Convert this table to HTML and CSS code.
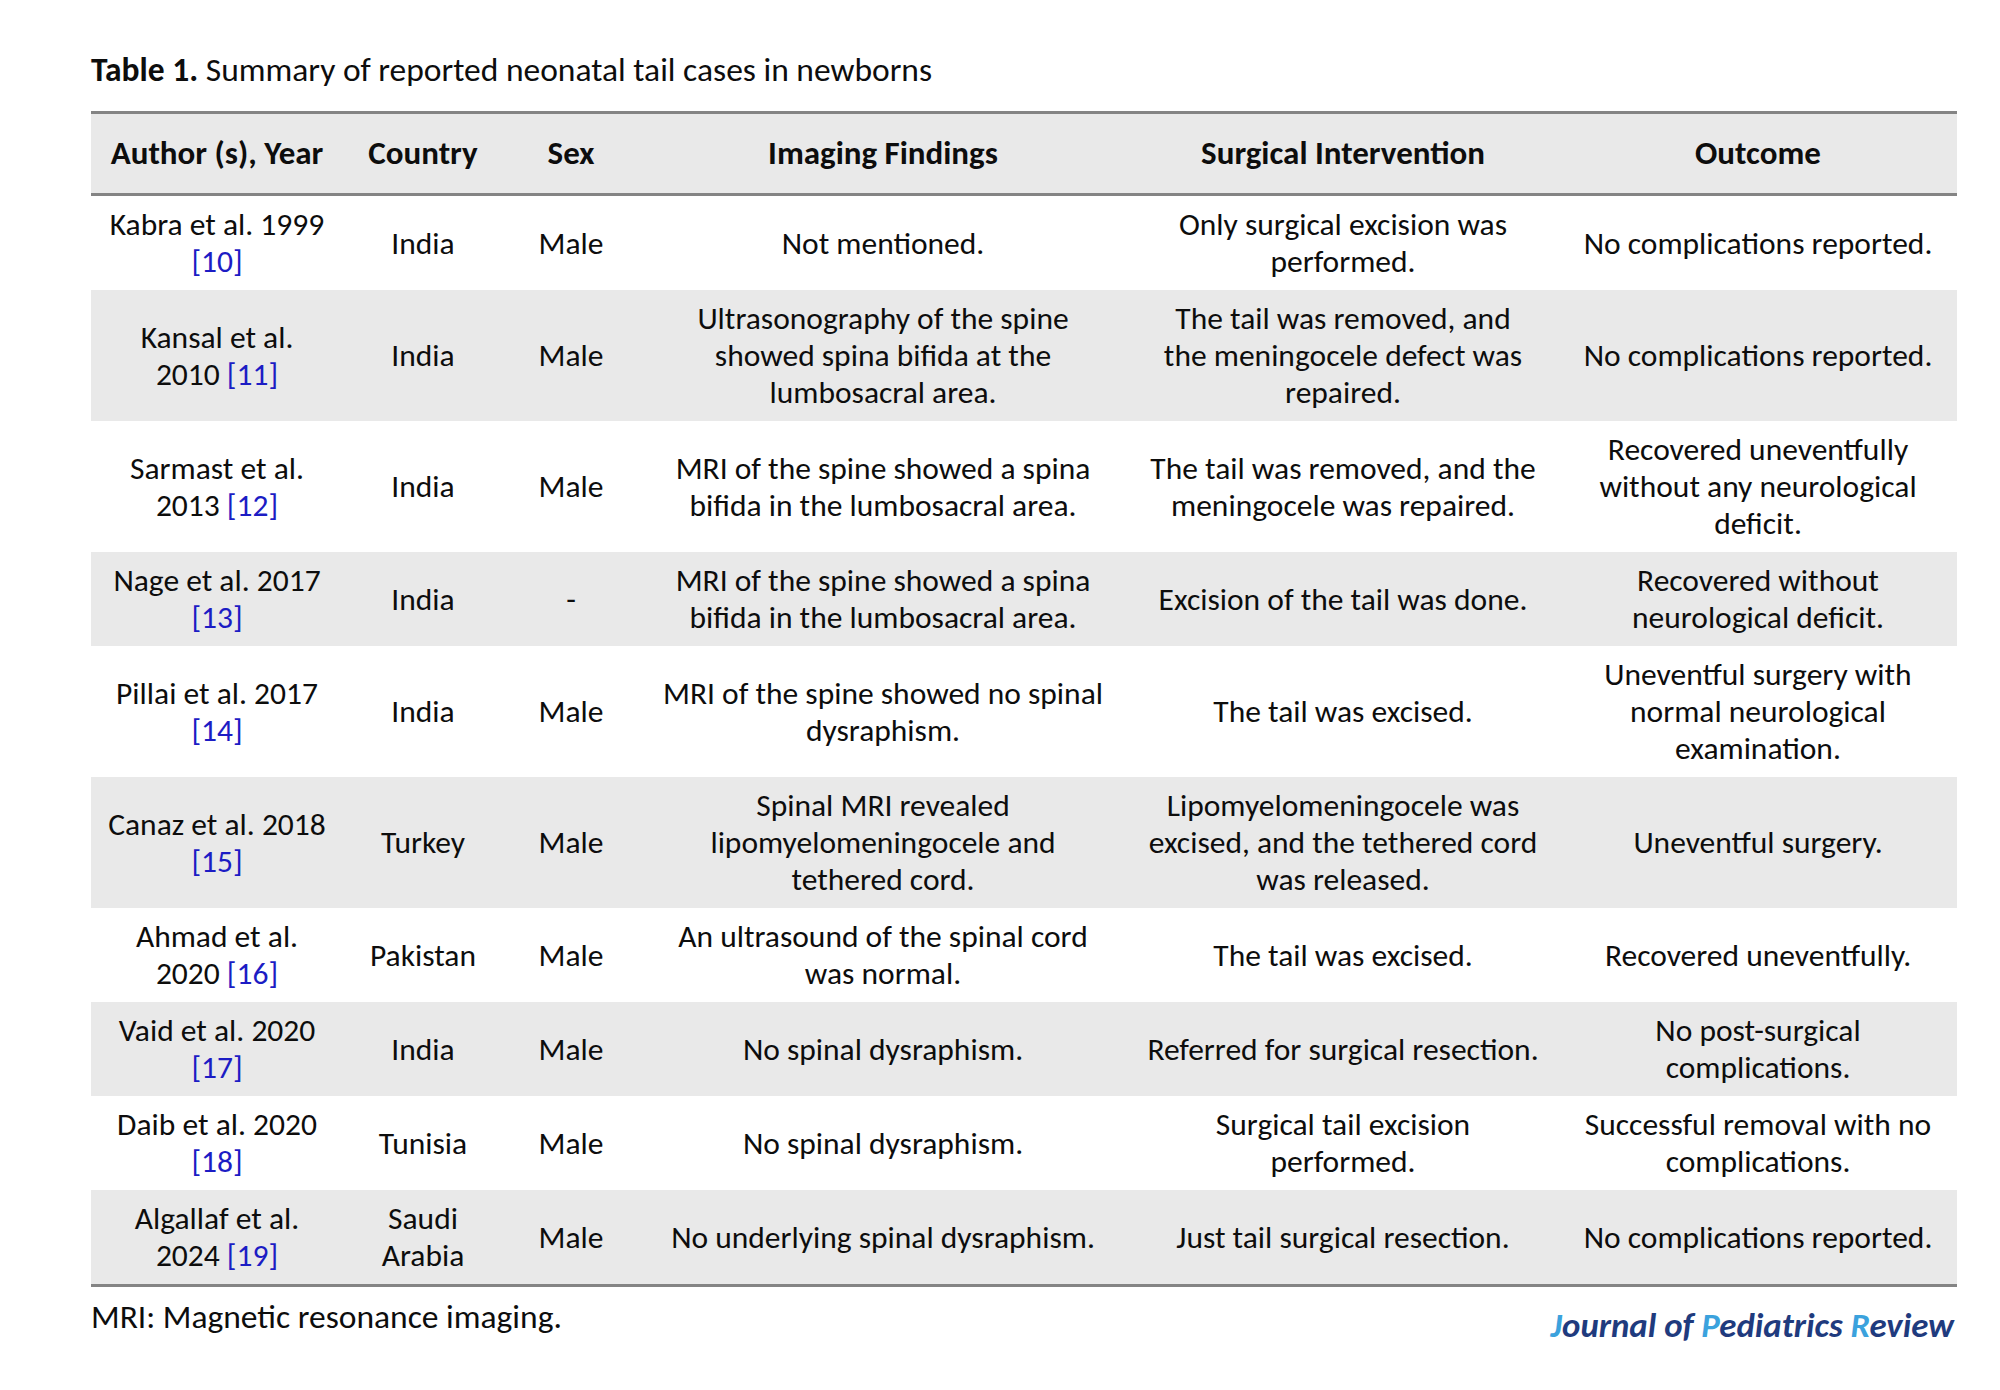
FILE: index.html
```html
<!DOCTYPE html>
<html lang="en">
<head>
<meta charset="utf-8">
<title>Table 1. Summary of reported neonatal tail cases in newborns</title>
<link rel="stylesheet" href="styles.css">
</head>
<body>
<div class="page">
  <p class="caption"><b>Table 1.</b> Summary of reported neonatal tail cases in newborns</p>
  <table class="cases">
    <colgroup>
      <col class="c1"><col class="c2"><col class="c3"><col class="c4"><col class="c5"><col class="c6">
    </colgroup>
    <thead>
      <tr>
        <th>Author (s), Year</th>
        <th>Country</th>
        <th>Sex</th>
        <th>Imaging Findings</th>
        <th>Surgical Intervention</th>
        <th>Outcome</th>
      </tr>
    </thead>
    <tbody>
      <tr>
        <td>Kabra et al. 1999<br><a class="ref">[10]</a></td>
        <td>India</td>
        <td>Male</td>
        <td>Not mentioned.</td>
        <td>Only surgical excision was<br>performed.</td>
        <td>No complications reported.</td>
      </tr>
      <tr class="alt">
        <td>Kansal et al.<br>2010 <a class="ref">[11]</a></td>
        <td>India</td>
        <td>Male</td>
        <td>Ultrasonography of the spine<br>showed spina bifida at the<br>lumbosacral area.</td>
        <td>The tail was removed, and<br>the meningocele defect was<br>repaired.</td>
        <td>No complications reported.</td>
      </tr>
      <tr>
        <td>Sarmast et al.<br>2013 <a class="ref">[12]</a></td>
        <td>India</td>
        <td>Male</td>
        <td>MRI of the spine showed a spina<br>bifida in the lumbosacral area.</td>
        <td>The tail was removed, and the<br>meningocele was repaired.</td>
        <td>Recovered uneventfully<br>without any neurological<br>deficit.</td>
      </tr>
      <tr class="alt">
        <td>Nage et al. 2017<br><a class="ref">[13]</a></td>
        <td>India</td>
        <td>-</td>
        <td>MRI of the spine showed a spina<br>bifida in the lumbosacral area.</td>
        <td>Excision of the tail was done.</td>
        <td>Recovered without<br>neurological deficit.</td>
      </tr>
      <tr>
        <td>Pillai et al. 2017<br><a class="ref">[14]</a></td>
        <td>India</td>
        <td>Male</td>
        <td>MRI of the spine showed no spinal<br>dysraphism.</td>
        <td>The tail was excised.</td>
        <td>Uneventful surgery with<br>normal neurological<br>examination.</td>
      </tr>
      <tr class="alt">
        <td>Canaz et al. 2018<br><a class="ref">[15]</a></td>
        <td>Turkey</td>
        <td>Male</td>
        <td>Spinal MRI revealed<br>lipomyelomeningocele and<br>tethered cord.</td>
        <td>Lipomyelomeningocele was<br>excised, and the tethered cord<br>was released.</td>
        <td>Uneventful surgery.</td>
      </tr>
      <tr>
        <td>Ahmad et al.<br>2020 <a class="ref">[16]</a></td>
        <td>Pakistan</td>
        <td>Male</td>
        <td>An ultrasound of the spinal cord<br>was normal.</td>
        <td>The tail was excised.</td>
        <td>Recovered uneventfully.</td>
      </tr>
      <tr class="alt">
        <td>Vaid et al. 2020<br><a class="ref">[17]</a></td>
        <td>India</td>
        <td>Male</td>
        <td>No spinal dysraphism.</td>
        <td>Referred for surgical resection.</td>
        <td>No post-surgical<br>complications.</td>
      </tr>
      <tr>
        <td>Daib et al. 2020<br><a class="ref">[18]</a></td>
        <td>Tunisia</td>
        <td>Male</td>
        <td>No spinal dysraphism.</td>
        <td>Surgical tail excision<br>performed.</td>
        <td>Successful removal with no<br>complications.</td>
      </tr>
      <tr class="alt">
        <td>Algallaf et al.<br>2024 <a class="ref">[19]</a></td>
        <td>Saudi<br>Arabia</td>
        <td>Male</td>
        <td>No underlying spinal dysraphism.</td>
        <td>Just tail surgical resection.</td>
        <td>No complications reported.</td>
      </tr>
    </tbody>
  </table>
  <div class="footer">
    <p class="note">MRI: Magnetic resonance imaging.</p>
    <p class="brand"><span class="hl">J</span>ournal of <span class="hl">P</span>ediatrics <span class="hl">R</span>eview</p>
  </div>
</div>
</body>
</html>
```

FILE: styles.css
```css
html, body {
  margin: 0;
  padding: 0;
  background: #ffffff;
}

body {
  font-family: Carlito, Lato, "Liberation Sans", sans-serif;
  color: #0d0d0d;
}

.page {
  width: 1866px;
  padding: 50px 0 0 91px;
}

.caption {
  margin: 0;
  font-size: 33.5px;
  line-height: 40px;
  height: 40px;
}

.caption b {
  font-weight: 700;
}

.cases {
  margin-top: 21px;
  width: 1866px;
  border-collapse: collapse;
  table-layout: fixed;
  font-size: 31.5px;
  line-height: 37px;
  border-top: 3px solid #848484;
  border-bottom: 3px solid #848484;
}

.c1 { width: 252px; }
.c2 { width: 160px; }
.c3 { width: 136px; }
.c4 { width: 488px; }
.c5 { width: 432px; }
.c6 { width: 398px; }

.cases thead tr {
  background: #e9e9e9;
  border-bottom: 3px solid #848484;
}

.cases th {
  height: 79px;
  padding: 0;
  font-size: 33px;
  font-weight: 700;
  text-align: center;
  vertical-align: middle;
  white-space: nowrap;
}

.cases td {
  padding: 10px 0;
  text-align: center;
  vertical-align: middle;
  white-space: nowrap;
}

.cases tr.alt {
  background: #e9e9e9;
}

.ref {
  color: #1c1cc4;
  text-decoration: none;
}

.footer {
  display: flex;
  justify-content: space-between;
  align-items: flex-start;
  width: 1866px;
}

.note {
  margin: 10px 0 0 0;
  font-size: 33.5px;
  line-height: 40px;
}

.brand {
  margin: 18px 3px 0 0;
  font-size: 34.8px;
  line-height: 40px;
  font-weight: 700;
  font-style: italic;
  color: #1f3b7e;
}

.brand .hl {
  color: #3ba2dd;
}
```
